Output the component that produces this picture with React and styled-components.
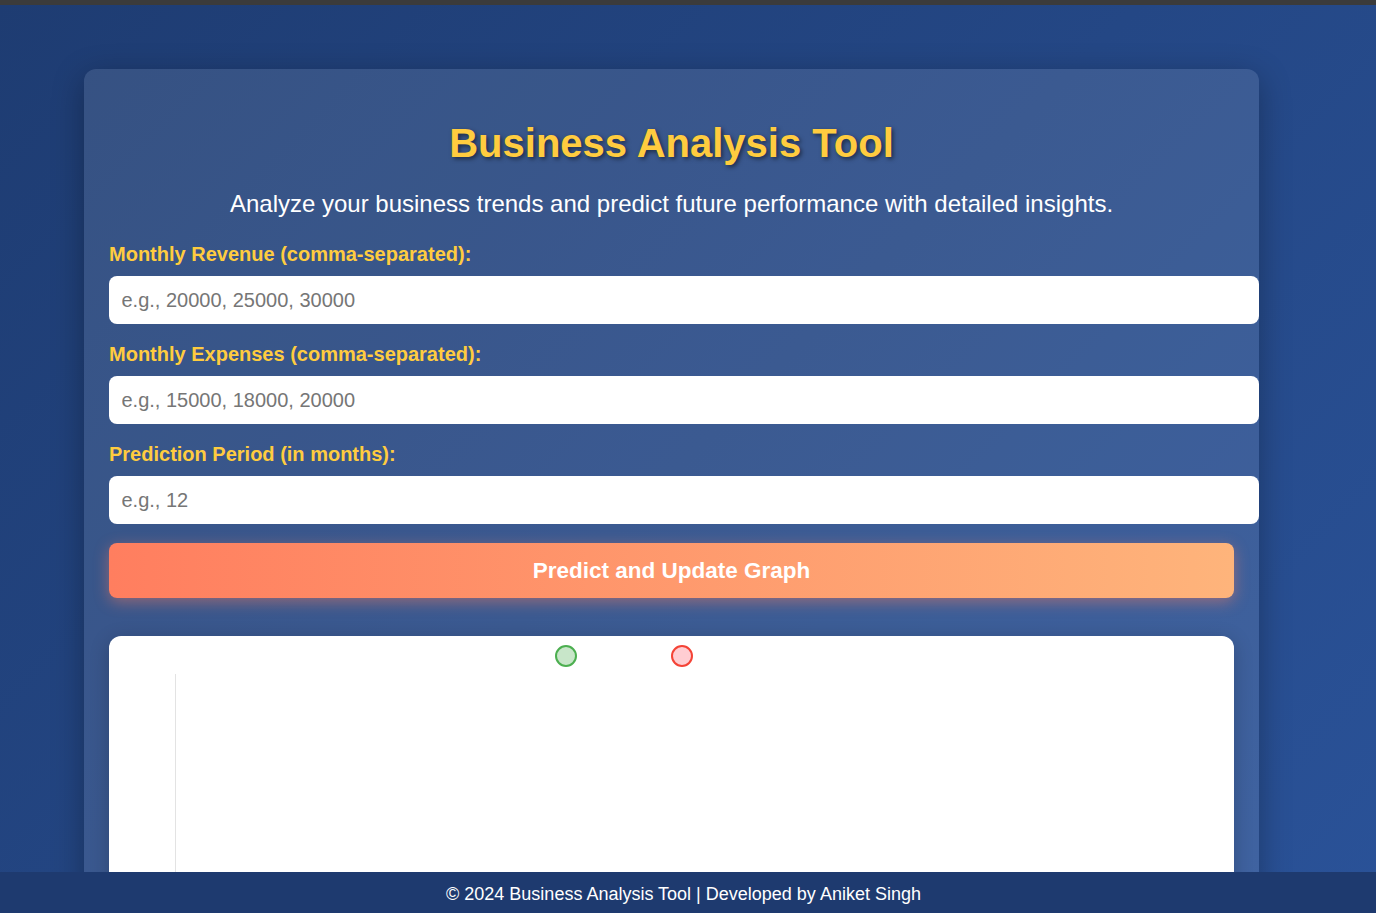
import React from "react";
import styled, { createGlobalStyle } from "styled-components";

const Global = createGlobalStyle`
  html, body { margin: 0; padding: 0; }
  body {
    font-family: "Liberation Sans", Arial, sans-serif;
    background: linear-gradient(135deg, #1e3c72 0%, #2a5298 100%);
    background-attachment: fixed;
    min-height: 100vh;
    color: #fff;
  }
`;

const TopBar = styled.div`
  height: 5px;
  background: #3b3b3b;
`;

const Page = styled.div`
  padding: 64px 0 80px 84px;
`;

const Container = styled.div`
  width: 1125px;
  padding: 25px;
  border-radius: 12px;
  background: rgba(255, 255, 255, 0.105);
  box-shadow: 0 8px 32px rgba(0, 0, 0, 0.3);
`;

const Title = styled.h1`
  margin: 27px 0 20px;
  font-size: 40px;
  font-weight: 700;
  text-align: center;
  color: #ffcc3f;
  text-shadow: 2px 2px 4px rgba(0, 0, 0, 0.5);
`;

const Subtitle = styled.p`
  margin: 24px 0 25px;
  font-size: 24px;
  text-align: center;
  color: #ffffff;
`;

const Field = styled.div`
  margin-bottom: 19px;
`;

const Label = styled.label`
  display: block;
  margin-bottom: 10px;
  font-size: 20px;
  font-weight: 700;
  color: #ffcc3f;
`;

const Input = styled.input`
  display: block;
  width: 100%;
  box-sizing: content-box;
  height: 24px;
  padding: 12px 12.5px;
  border: none;
  border-radius: 8px;
  background: #fff;
  font-family: "Liberation Sans", Arial, sans-serif;
  font-size: 20px;
  color: #333;
  outline: none;
  &::placeholder { color: #767676; }
`;

const Button = styled.button`
  display: block;
  width: 100%;
  height: 55px;
  border: none;
  border-radius: 8px;
  background: linear-gradient(90deg, #ff7e5f 0%, #feb47b 100%);
  box-shadow: 0 4px 15px rgba(255, 126, 95, 0.45);
  color: #fff;
  font-family: "Liberation Sans", Arial, sans-serif;
  font-size: 22.5px;
  font-weight: 700;
  cursor: pointer;
`;

const ChartCard = styled.div`
  margin-top: 38px;
  padding: 9px 20px 0;
  background: #fff;
  border-radius: 12px;
  box-shadow: 0 4px 20px rgba(0, 0, 0, 0.2);
`;

const Legend = styled.div`
  display: flex;
  justify-content: center;
  gap: 94px;
  padding-right: 96px;
`;

const Dot = styled.span`
  width: 18px;
  height: 18px;
  border-radius: 50%;
  border: 2.5px solid ${(p) => p.$stroke};
  background: ${(p) => p.$fill};
`;

const PlotArea = styled.div`
  margin: 7px 0 0 46px;
  height: 420px;
  border-left: 1px solid #e3e3e3;
`;

const Footer = styled.footer`
  position: fixed;
  left: 0;
  right: 0;
  bottom: 0;
  padding: 12px 9px 8px 0;
  background: #1e3a6f;
  color: #fff;
  font-size: 18px;
  text-align: center;
`;

export default function App() {
  return (
    <>
      <Global />
      <TopBar />
      <Page>
        <Container>
          <Title>Business Analysis Tool</Title>
          <Subtitle>
            Analyze your business trends and predict future performance with detailed insights.
          </Subtitle>
          <Field>
            <Label htmlFor="rev">Monthly Revenue (comma-separated):</Label>
            <Input id="rev" placeholder="e.g., 20000, 25000, 30000" />
          </Field>
          <Field>
            <Label htmlFor="exp">Monthly Expenses (comma-separated):</Label>
            <Input id="exp" placeholder="e.g., 15000, 18000, 20000" />
          </Field>
          <Field>
            <Label htmlFor="per">Prediction Period (in months):</Label>
            <Input id="per" placeholder="e.g., 12" />
          </Field>
          <Button>Predict and Update Graph</Button>
          <ChartCard>
            <Legend>
              <Dot $stroke="#4caf50" $fill="#c8e6c9" />
              <Dot $stroke="#f44336" $fill="#ffcdd2" />
            </Legend>
            <PlotArea />
          </ChartCard>
        </Container>
      </Page>
      <Footer>© 2024 Business Analysis Tool | Developed by Aniket Singh</Footer>
    </>
  );
}
